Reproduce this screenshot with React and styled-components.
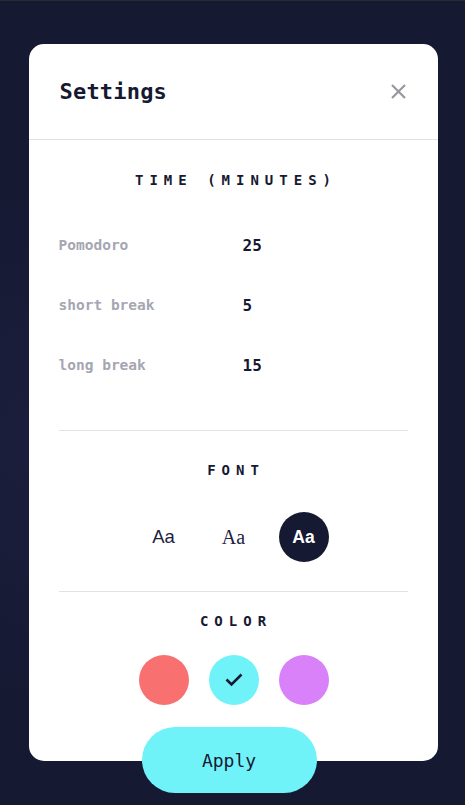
import React, { useState } from "react";
import styled, { createGlobalStyle } from "styled-components";

const Global = createGlobalStyle`
  html, body { margin: 0; padding: 0; }
  body {
    background: radial-gradient(ellipse 70% 45% at 10% 55%, #1b1f3d 0%, #151932 70%);
    background-color: #151932;
    min-height: 805px;
    font-family: "DejaVu Sans Mono", "Liberation Mono", monospace;
  }
  * { box-sizing: border-box; }
`;

const Page = styled.div`
  min-height: 805px;
  border-top: 1px solid #2a2a2c;
  padding: 43px 0 0 1px;
  display: flex;
  justify-content: center;
  align-items: flex-start;
`;

const Modal = styled.div`
  width: 409px;
  background: #ffffff;
  border-radius: 15px;
  display: flex;
  flex-direction: column;
`;

const Header = styled.div`
  height: 96px;
  border-bottom: 1px solid #e3e1e1;
  padding: 0 30px 0 31px;
  display: flex;
  align-items: center;
  justify-content: space-between;
`;

const Title = styled.h2`
  margin: 0;
  font-family: "DejaVu Sans Mono", monospace;
  font-weight: 700;
  font-size: 22px;
  color: #161932;
  letter-spacing: 0.2px;
`;

const CloseButton = styled.button`
  border: 0;
  background: none;
  padding: 0;
  width: 20px;
  height: 20px;
  display: flex;
  align-items: center;
  justify-content: center;
  margin-right: -1px;
  cursor: pointer;
`;

const Body = styled.div`
  padding: 0 30px;
  display: flex;
  flex-direction: column;
`;

const Heading = styled.h3`
  margin: ${(p) => p.$mt}px 0 0 0;
  height: 20px;
  line-height: 20px;
  text-align: center;
  font-family: "DejaVu Sans Mono", monospace;
  font-weight: 700;
  font-size: 14px;
  letter-spacing: 6px;
  padding-left: 6px;
  color: #161932;
`;

const Rows = styled.div`
  margin-top: 25px;
  display: flex;
  flex-direction: column;
`;

const Row = styled.div`
  height: 60px;
  display: grid;
  grid-template-columns: 184px 1fr;
  align-items: center;
`;

const Label = styled.span`
  font-family: "DejaVu Sans Mono", monospace;
  font-weight: 700;
  font-size: 14.5px;
  color: #a5a6b2;
`;

const Value = styled.span`
  font-family: "DejaVu Sans Mono", monospace;
  font-weight: 700;
  font-size: 16px;
  color: #161932;
`;

const Divider = styled.hr`
  margin: ${(p) => p.$mt}px 0 0 0;
  border: 0;
  border-top: 1px solid #e3e1e1;
  height: 0;
`;

const Options = styled.div`
  margin-top: ${(p) => p.$mt}px;
  display: flex;
  justify-content: center;
  gap: 20px;
  padding-left: 1px;
`;

const FontOption = styled.button`
  width: 50px;
  height: 50px;
  border-radius: 50%;
  border: 0;
  padding: 0;
  display: flex;
  align-items: center;
  justify-content: center;
  cursor: pointer;
  background: ${(p) => (p.$active ? "#161932" : "transparent")};
  color: ${(p) => (p.$active ? "#ffffff" : "#1e213f")};
  font-family: ${(p) => p.$family};
  font-weight: ${(p) => p.$weight};
  font-size: ${(p) => p.$size}px;
`;

const ColorOption = styled.button`
  width: 50px;
  height: 50px;
  border-radius: 50%;
  border: 0;
  padding: 0;
  background: ${(p) => p.$color};
  display: flex;
  align-items: center;
  justify-content: center;
  cursor: pointer;
`;

const ApplyButton = styled.button`
  margin: 22px 8px -32px 0;
  align-self: center;
  width: 175px;
  height: 66px;
  border: 0;
  border-radius: 33px;
  background: #70f3f8;
  color: #161932;
  font-family: "DejaVu Sans Mono", monospace;
  font-size: 18px;
  cursor: pointer;
`;

const times = [
  { label: "Pomodoro", value: 25 },
  { label: "short break", value: 5 },
  { label: "long break", value: 15 },
];

const fonts = [
  { family: '"Liberation Sans", sans-serif', weight: 400, size: 18.5 },
  { family: '"Liberation Serif", serif', weight: 400, size: 20 },
  { family: '"Liberation Sans", sans-serif', weight: 700, size: 17.5 },
];

const colors = ["#f87070", "#70f3f8", "#d881f8"];

export default function App() {
  const [font, setFont] = useState(2);
  const [color, setColor] = useState(1);
  return (
    <>
      <Global />
      <Page>
        <Modal>
          <Header>
            <Title>Settings</Title>
            <CloseButton aria-label="close">
              <svg width="15" height="15" viewBox="0 0 15 15">
                <path d="M1 1 L14 14 M14 1 L1 14" stroke="#97979f" strokeWidth="2.2" strokeLinecap="butt" />
              </svg>
            </CloseButton>
          </Header>
          <Body>
            <Heading $mt={30}>TIME (MINUTES)</Heading>
            <Rows>
              {times.map((t) => (
                <Row key={t.label}>
                  <Label>{t.label}</Label>
                  <Value>{t.value}</Value>
                </Row>
              ))}
            </Rows>
            <Divider $mt={35} />
            <Heading $mt={29}>FONT</Heading>
            <Options $mt={32}>
              {fonts.map((f, i) => (
                <FontOption
                  key={i}
                  $family={f.family}
                  $weight={f.weight}
                  $size={f.size}
                  $active={font === i}
                  onClick={() => setFont(i)}
                >
                  Aa
                </FontOption>
              ))}
            </Options>
            <Divider $mt={29} />
            <Heading $mt={19}>COLOR</Heading>
            <Options $mt={24}>
              {colors.map((c, i) => (
                <ColorOption key={c} $color={c} onClick={() => setColor(i)}>
                  {color === i && (
                    <svg width="18" height="14" viewBox="0 0 18 14">
                      <path d="M1.5 6.5 L6.5 11.5 L16.5 1.5" fill="none" stroke="#161932" strokeWidth="2.6" />
                    </svg>
                  )}
                </ColorOption>
              ))}
            </Options>
            <ApplyButton>Apply</ApplyButton>
          </Body>
        </Modal>
      </Page>
    </>
  );
}
